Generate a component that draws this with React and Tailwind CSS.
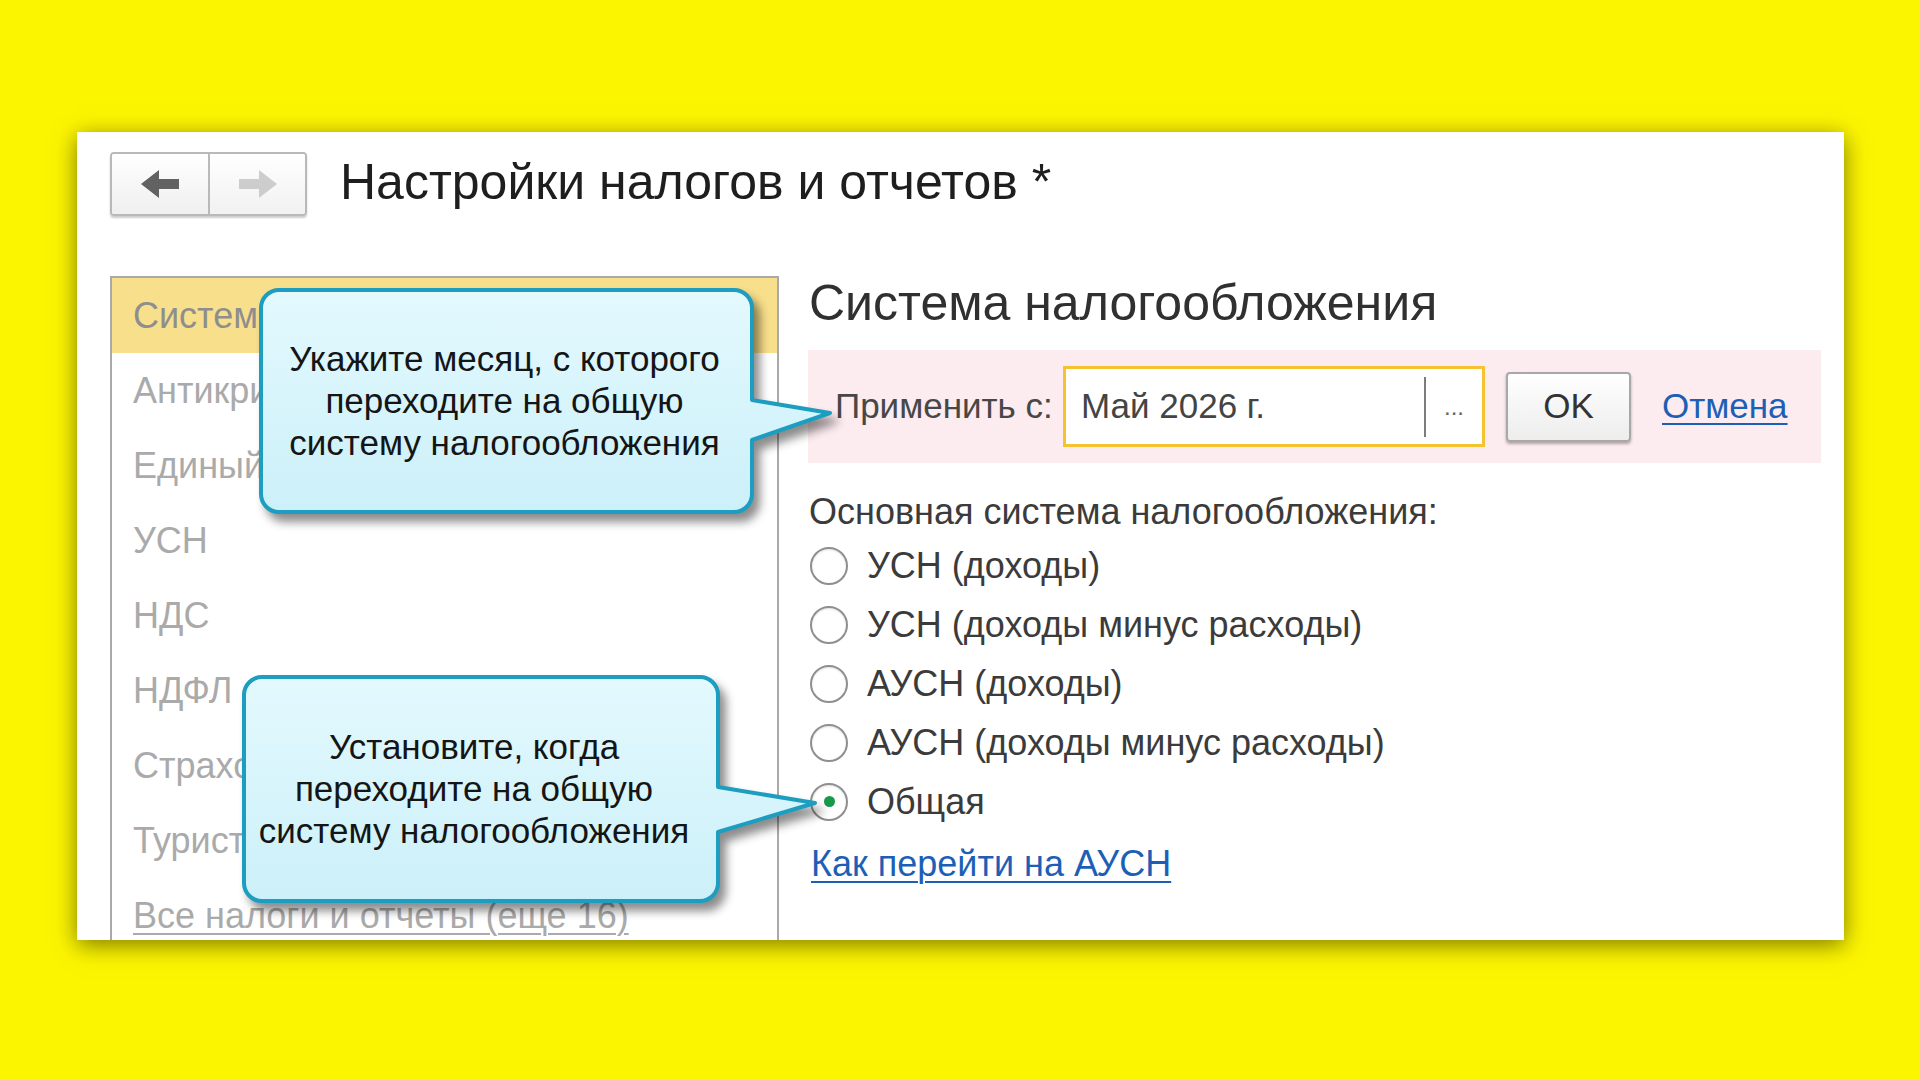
import React from 'react';

// Пункты левого меню настроек; clip — ширина видимой части до края выноски
const sections = [
    { name: 'Система налогообложения', clip: 'max-w-[128px]' },
    { name: 'Антикризисные меры', clip: 'max-w-[128px]' },
    { name: 'Единый налоговый платеж', clip: 'max-w-[128px]' },
    { name: 'УСН', clip: '' },
    { name: 'НДС', clip: '' },
    { name: 'НДФЛ', clip: 'max-w-[111px]' },
    { name: 'Страховые взносы', clip: 'max-w-[111px]' },
    { name: 'Туристический налог', clip: 'max-w-[111px]' },
];

const regimes = [
    { label: 'УСН (доходы)', checked: false },
    { label: 'УСН (доходы минус расходы)', checked: false },
    { label: 'АУСН (доходы)', checked: false },
    { label: 'АУСН (доходы минус расходы)', checked: false },
    { label: 'Общая', checked: true },
];

const Arrow = ({ dir, color }) => (
    <svg width="38" height="28" viewBox="0 0 38 28">
        <path
            d={dir === 'left' ? 'M0 14 L18 0 V9 H38 V19 H18 V28 Z' : 'M38 14 L20 0 V9 H0 V19 H20 V28 Z'}
            fill={color}
        />
    </svg>
);

const NavButtons = () => (
    <div className="flex h-[64px] rounded-[4px] border-2 border-[#b9b9b9] overflow-hidden shadow-[0_2px_2px_rgba(0,0,0,0.2)]">
        <div className="w-[98px] flex items-center justify-center border-r-2 border-[#b9b9b9] bg-gradient-to-b from-white to-[#efefef]">
            <Arrow dir="left" color="#626262" />
        </div>
        <div className="w-[95px] flex items-center justify-center bg-gradient-to-b from-white to-[#f1f1f1]">
            <Arrow dir="right" color="#cdcdcd" />
        </div>
    </div>
);

const Radio = ({ label, checked }) => (
    <div className="h-[59px] flex items-center">
        <div className="w-[38px] h-[38px] ml-[2px] rounded-full border-2 border-[#8f8f8f] bg-white flex items-center justify-center shadow-[inset_0_1px_2px_rgba(0,0,0,0.12)]">
            {checked && <div className="w-[11px] h-[11px] rounded-full bg-[#17994a]" />}
        </div>
        <span className="ml-[19px] text-[36px] leading-[42px] text-[#3b3b3b]">{label}</span>
    </div>
);

// Выноска-подсказка: форма рисуется в svg, текст лежит поверх
const Callout = ({ id, svgBox, path, textBox, lines }) => (
    <>
        <svg
            className="absolute drop-shadow-[6px_8px_5px_rgba(0,0,0,0.45)]"
            style={{ left: svgBox.left, top: svgBox.top }}
            width={svgBox.w}
            height={svgBox.h}
        >
            <defs>
                <linearGradient id={id} x1="0" y1="0" x2="0" y2="1">
                    <stop offset="0" stopColor="#e3f9fe" />
                    <stop offset="1" stopColor="#ccf0f9" />
                </linearGradient>
            </defs>
            <path d={path} fill={`url(#${id})`} stroke="#1d9dbf" strokeWidth="4" strokeLinejoin="round" />
        </svg>
        <div
            className="absolute flex flex-col items-center justify-center text-center text-[35px] leading-[42px] text-[#151515]"
            style={{ left: textBox.left, top: textBox.top, width: textBox.w, height: textBox.h }}
        >
            {lines.map((l) => (
                <div key={l}>{l}</div>
            ))}
        </div>
    </>
);

export default function App() {
    return (
        <div
            className="w-[1920px] h-[1080px] bg-[#fcf500] pl-[77px] pt-[132px] overflow-hidden"
            style={{ fontFamily: '"Liberation Sans", Arial, sans-serif' }}
        >
            <div className="relative w-[1767px] h-[808px] bg-white overflow-hidden shadow-[0_5px_22px_rgba(0,0,0,0.5)]">
                {/* Заголовок формы */}
                <div className="flex items-center pl-[33px] pt-[20px]">
                    <NavButtons />
                    <h1 className="ml-[33px] -mt-[5px] text-[50px] leading-[50px] text-[#1e1e1e]">
                        Настройки налогов и отчетов *
                    </h1>
                </div>

                <div className="flex mt-[60px] pl-[33px]">
                    {/* Левое меню */}
                    <div className="w-[669px] h-[700px] border-2 border-b-0 border-[#a9a9a9]">
                        {sections.map((s, i) => (
                            <div
                                key={s.name}
                                className={
                                    i === 0
                                        ? 'h-[75px] flex items-center pl-[21px] text-[36px] bg-[#f8df8c] text-[#8e8e8e]'
                                        : 'h-[75px] flex items-center pl-[21px] text-[36px] text-[#aaaaaa]'
                                }
                            >
                                <span className={`${s.clip} overflow-hidden whitespace-nowrap`}>{s.name}</span>
                            </div>
                        ))}
                        <div className="h-[75px] flex items-center pl-[21px] text-[36px] text-[#aaaaaa] underline decoration-2 underline-offset-[5px] whitespace-nowrap">
                            Все налоги и отчеты (еще 16)
                        </div>
                    </div>

                    {/* Правая часть */}
                    <div className="ml-[29px] w-[1013px]">
                        <h2 className="mt-[2px] text-[50px] leading-[50px] text-[#303030] pl-[1px]">
                            Система налогообложения
                        </h2>

                        <div className="mt-[22px] h-[113px] bg-[#fcebef] flex items-center pl-[27px]">
                            <span className="w-[228px] text-[35px] text-[#474747]">Применить с:</span>
                            <div className="w-[422px] h-[81px] border-[3px] border-[#f5c330] bg-white flex items-center">
                                <span className="flex-1 pl-[15px] text-[35px] text-[#444444]">Май 2026 г.</span>
                                <div className="w-[2px] h-[60px] bg-[#7d7d7d]" />
                                <span className="w-[56px] text-center text-[24px] text-[#666666]">...</span>
                            </div>
                            <div className="ml-[21px] w-[125px] h-[70px] rounded-[4px] border-2 border-[#a8a8a8] bg-gradient-to-b from-white to-[#ededed] shadow-[0_2px_3px_rgba(0,0,0,0.3)] flex items-center justify-center text-[35px] text-[#333333]">
                                OK
                            </div>
                            <span className="ml-[31px] text-[35px] text-[#1d5fb6] underline decoration-2 underline-offset-[5px]">
                                Отмена
                            </span>
                        </div>

                        <div className="mt-[28px] text-[36px] leading-[42px] text-[#3b3b3b] pl-[1px]">
                            Основная система налогообложения:
                        </div>

                        <div className="mt-[3px]">
                            {regimes.map((r) => (
                                <Radio key={r.label} label={r.label} checked={r.checked} />
                            ))}
                        </div>

                        <div className="mt-[12px] pl-[3px] text-[36px] leading-[42px] text-[#1d5fb6] underline decoration-2 underline-offset-[5px]">
                            Как перейти на АУСН
                        </div>
                    </div>
                </div>

                {/* Выноски */}
                <Callout
                    id="cg1"
                    svgBox={{ left: 180, top: 154, w: 580, h: 240 }}
                    path="M22 4 H477 A18 18 0 0 1 495 22 V114 L573 127 L495 154 V208 A18 18 0 0 1 477 226 H22 A18 18 0 0 1 4 208 V22 A18 18 0 0 1 22 4 Z"
                    textBox={{ left: 182, top: 158, w: 491, h: 222 }}
                    lines={['Укажите месяц, с которого', 'переходите на общую', 'систему налогообложения']}
                />
                <Callout
                    id="cg2"
                    svgBox={{ left: 163, top: 541, w: 590, h: 240 }}
                    path="M22 4 H460 A18 18 0 0 1 478 22 V114 L575 130 L478 159 V210 A18 18 0 0 1 460 228 H22 A18 18 0 0 1 4 210 V22 A18 18 0 0 1 22 4 Z"
                    textBox={{ left: 160, top: 545, w: 474, h: 224 }}
                    lines={['Установите, когда', 'переходите на общую', 'систему налогообложения']}
                />
            </div>
        </div>
    );
}
